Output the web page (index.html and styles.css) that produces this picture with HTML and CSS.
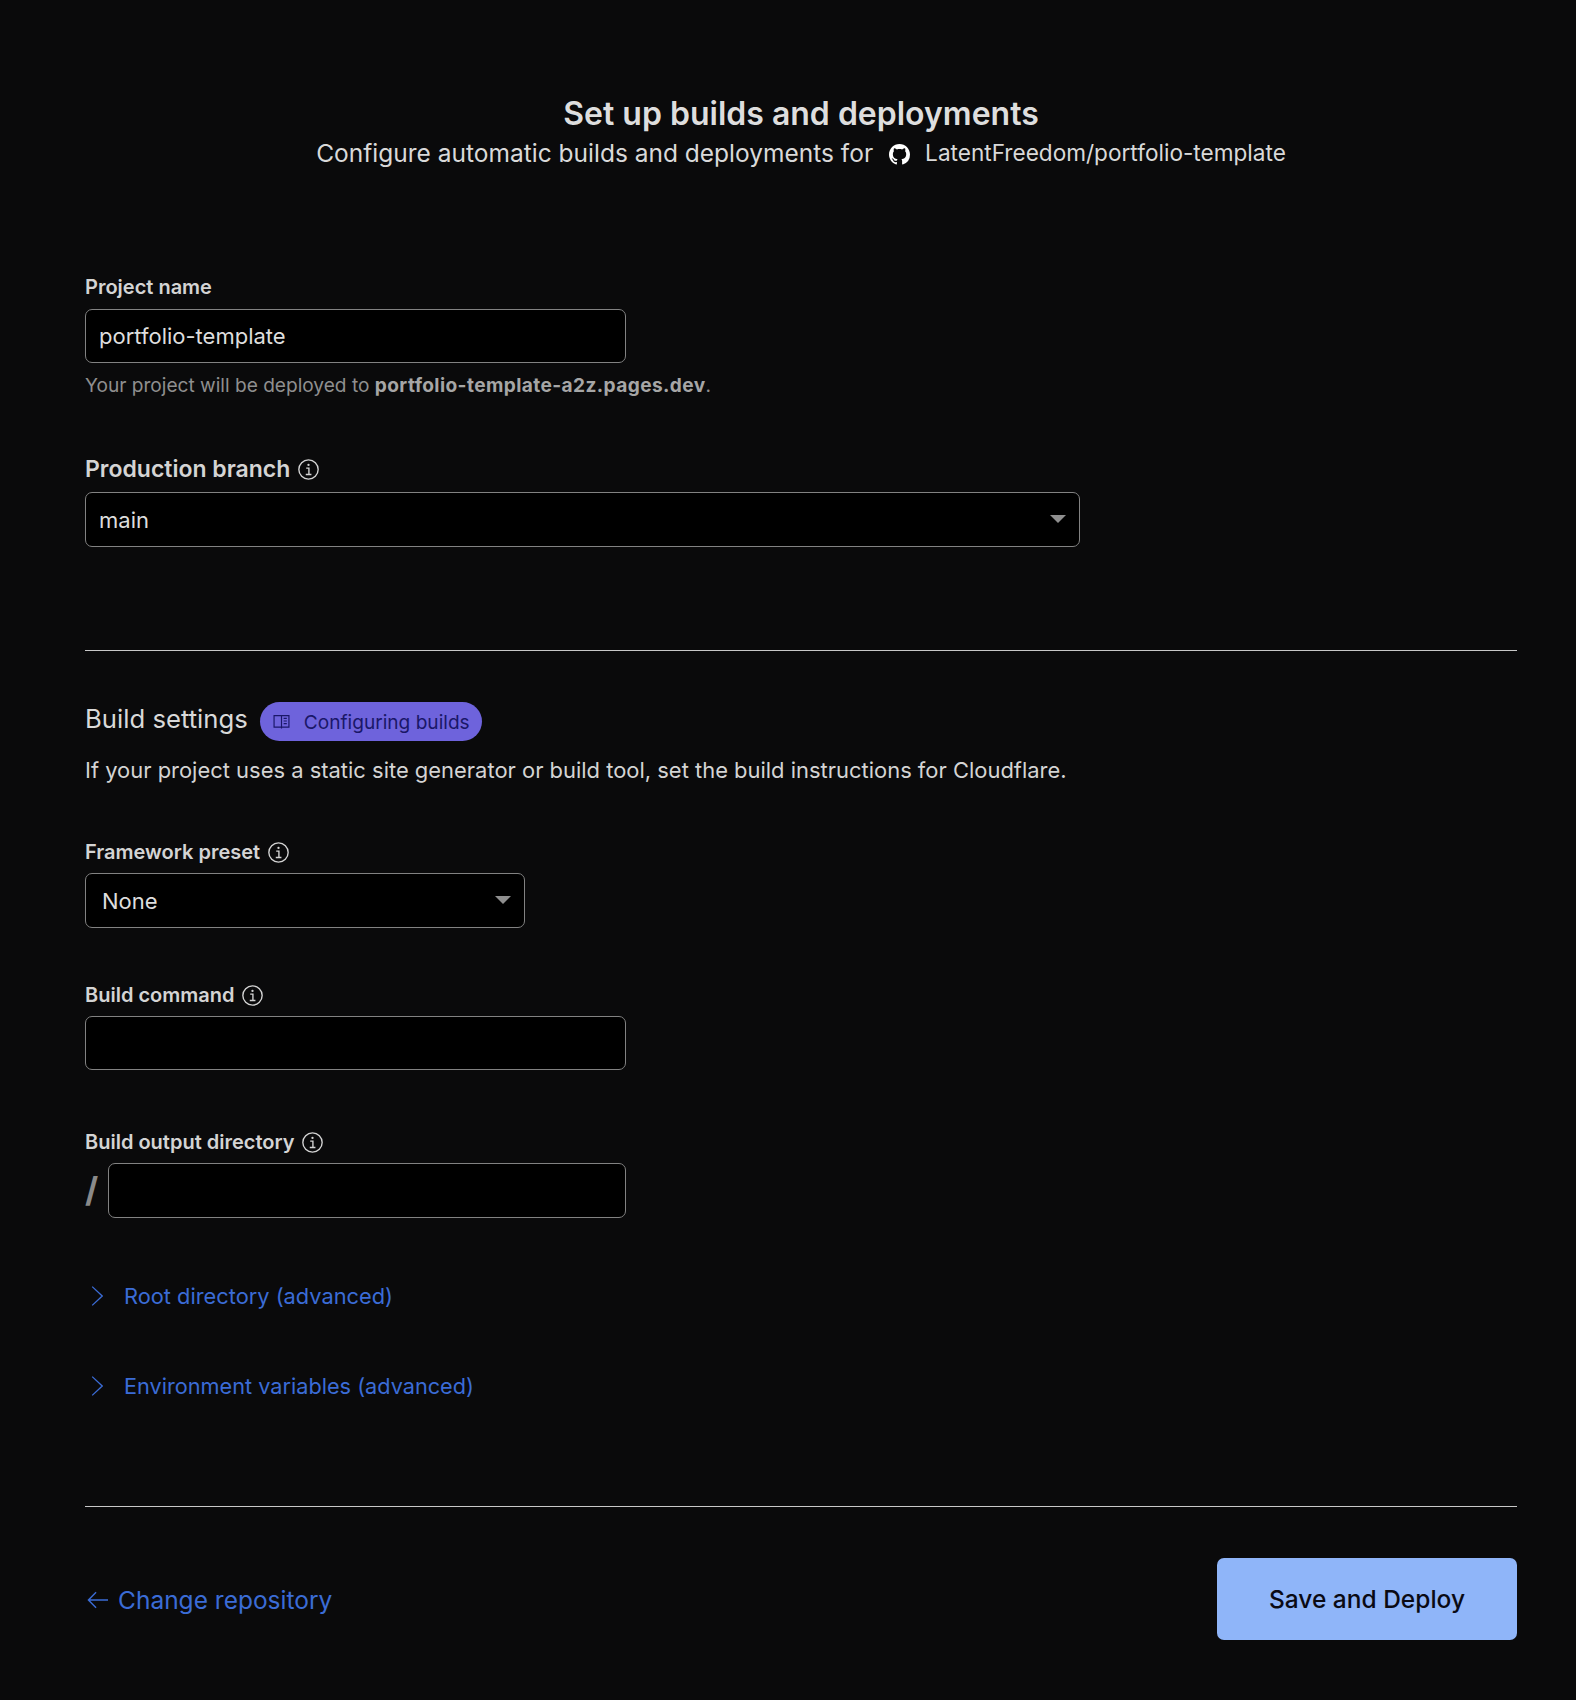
FILE: index.html
```html
<!DOCTYPE html>
<html lang="en">
<head>
  <meta charset="UTF-8">
  <title>Set up builds and deployments</title>
  <link rel="stylesheet" href="styles.css">
</head>

<body>

  <svg class="defs" width="0" height="0">
    <symbol id="info" viewBox="0 0 20 20">
      <circle cx="10" cy="10" r="9.2" fill="none" stroke="currentColor" stroke-width="1.3"/>
      <circle cx="10" cy="5.6" r="1.1" fill="currentColor"/>
      <path d="M7.8 8.7h2.6v6M7.4 14.8h5.4" fill="none" stroke="currentColor" stroke-width="1.3"/>
    </symbol>
    <symbol id="chevron" viewBox="0 0 12 20">
      <path d="M1.2 .6l10 9.4-10 9.4" fill="none" stroke="currentColor" stroke-width="1.3"/>
    </symbol>
    <symbol id="caret" viewBox="0 0 16 8">
      <path d="M0 0h16l-8 8z" fill="currentColor"/>
    </symbol>
  </svg>

  <header class="page-head">
    <h1>Set up builds and deployments</h1>
    <p class="subtitle">
      <span>Configure automatic builds and deployments for</span>
      <svg class="gh-icon" viewBox="0 0 16 16"><path fill="currentColor" d="M8 0C3.58 0 0 3.58 0 8c0 3.54 2.29 6.53 5.47 7.59.4.07.55-.17.55-.38 0-.19-.01-.82-.01-1.49-2.01.37-2.53-.49-2.69-.94-.09-.23-.48-.94-.82-1.13-.28-.15-.68-.52-.01-.53.63-.01 1.08.58 1.23.82.72 1.21 1.87.87 2.33.66.07-.52.28-.87.51-1.07-1.78-.2-3.64-.89-3.64-3.95 0-.87.31-1.59.82-2.15-.08-.2-.36-1.02.08-2.12 0 0 .67-.21 2.2.82.64-.18 1.32-.27 2-.27.68 0 1.36.09 2 .27 1.53-1.04 2.2-.82 2.2-.82.44 1.1.16 1.92.08 2.12.51.56.82 1.27.82 2.15 0 3.07-1.87 3.75-3.65 3.95.29.25.54.73.54 1.48 0 1.07-.01 1.93-.01 2.2 0 .21.15.46.55.38A8.013 8.013 0 0016 8c0-4.42-3.58-8-8-8z"/></svg>
      <span class="repo">LatentFreedom/portfolio-template</span>
    </p>
  </header>

  <section class="top-fields">
    <label class="field-label name-label">Project name</label>
    <input class="text-input" type="text" value="portfolio-template">
    <p class="hint">Your project will be deployed to <strong>portfolio-template-a2z.pages.dev</strong>.</p>

    <label class="field-label big">Production branch <svg class="info"><use href="#info"/></svg></label>
    <div class="select wide">
      <span>main</span>
      <svg class="caret"><use href="#caret"/></svg>
    </div>
  </section>

  <hr class="rule first">

  <section class="build">
    <div class="build-head">
      <h2>Build settings</h2>
      <a class="pill" href="#">
        <svg class="book" viewBox="0 0 16 16" fill="none" stroke="currentColor" stroke-width="1.1">
          <path d="M8 2.5H1v10.8h7zM8 2.5h7v10.8H8zM8 13.3v1.2M10 5h3M10 7.5h3M10 10h3"/>
        </svg>
        Configuring builds
      </a>
    </div>
    <p class="intro">If your project uses a static site generator or build tool, set the build instructions for Cloudflare.</p>

    <label class="field-label preset-label">Framework preset <svg class="info"><use href="#info"/></svg></label>
    <div class="select preset">
      <span>None</span>
      <svg class="caret"><use href="#caret"/></svg>
    </div>

    <label class="field-label command-label">Build command <svg class="info"><use href="#info"/></svg></label>
    <input class="text-input" type="text">

    <label class="field-label output-label">Build output directory <svg class="info"><use href="#info"/></svg></label>
    <div class="output-row">
      <span class="slash">/</span>
      <input class="text-input" type="text">
    </div>

    <a class="advanced root" href="#"><svg class="chevron"><use href="#chevron"/></svg>Root directory (advanced)</a>
    <a class="advanced env" href="#"><svg class="chevron"><use href="#chevron"/></svg>Environment variables (advanced)</a>
  </section>

  <hr class="rule last">

  <footer class="actions">
    <a class="back" href="#">
      <svg class="arrow" viewBox="0 0 22 18" fill="none" stroke="currentColor" stroke-width="1.5"><path d="M9.5 1L1.5 9l8 8M1.5 9H22"/></svg>
      Change repository
    </a>
    <button class="deploy">Save and Deploy</button>
  </footer>

</body>
</html>
```

FILE: styles.css
```css
* {
  box-sizing: border-box;
}

body {
  margin: 0;
  height: 1700px;
  padding: 0 59px 0 85px;
  background: #0a0a0b;
  color: #d9d9d9;
  font-family: Inter, sans-serif;
}

.defs {
  display: block;
  height: 0;
}

.page-head {
  padding-top: 96px;
  text-align: center;
}

h1 {
  margin: 0;
  font-size: 32px;
  line-height: 36px;
  font-weight: 600;
  color: #dedede;
}

.subtitle {
  display: flex;
  justify-content: center;
  align-items: center;
  margin: 3px 0 0;
  font-size: 24.5px;
  line-height: 36px;
  color: #d9d9d9;
}

.gh-icon {
  width: 21px;
  height: 21px;
  margin: 2px 15px 0 16px;
  color: #fff;
}

.repo {
  font-size: 22.6px;
}

.top-fields {
  margin-top: 104px;
}

.field-label {
  display: flex;
  align-items: center;
  gap: 8px;
  height: 24px;
  margin-bottom: 9px;
  font-size: 20px;
  font-weight: 600;
  color: #d4d4d4;
}

.name-label {
  margin-bottom: 10px;
}

.field-label.big {
  height: 28px;
  margin-top: 57px;
  font-size: 23px;
}

.info {
  width: 21px;
  height: 21px;
  color: #d4d4d4;
}

.text-input {
  display: block;
  width: 541px;
  height: 54px;
  padding: 0 13px;
  background: #000;
  border: 1px solid #828282;
  border-radius: 7px;
  color: #dedede;
  font-family: Inter, sans-serif;
  font-size: 22px;
}

.hint {
  margin: 9px 0 0;
  font-size: 19.1px;
  line-height: 26px;
  color: #8f8f8f;
}

.hint strong {
  font-weight: 700;
  letter-spacing: 0.4px;
  color: #a6a6a6;
}

.select {
  display: flex;
  justify-content: space-between;
  align-items: center;
  height: 55px;
  padding: 0 13px;
  background: #000;
  border: 1px solid #828282;
  border-radius: 7px;
  color: #dedede;
  font-size: 22px;
}

.select.wide {
  width: 995px;
}

.select.preset {
  width: 440px;
  padding: 0 13px 0 16px;
}

.caret {
  width: 16px;
  height: 8px;
  margin-bottom: 2px;
  color: #8f8f8f;
}

.rule {
  height: 1px;
  margin: 0;
  border: 0;
  background: #c8c8c8;
}

.rule.first {
  margin-top: 103px;
}

.build-head {
  display: flex;
  align-items: center;
  gap: 12px;
  margin-top: 51px;
}

h2 {
  margin: 0 0 6px;
  font-size: 25.7px;
  font-weight: 400;
  color: #d9d9d9;
}

.pill {
  display: flex;
  align-items: center;
  gap: 14px;
  height: 39px;
  padding: 0 12px 0 13px;
  border-radius: 20px;
  background: #6e63dc;
  color: #1a1768;
  font-size: 19.1px;
  text-decoration: none;
}

.book {
  width: 17px;
  height: 17px;
}

.intro {
  margin: 14px 0 0;
  font-size: 21.95px;
  line-height: 30px;
  color: #d4d4d4;
}

.preset-label {
  margin-top: 55px;
}

.command-label {
  margin-top: 55px;
}

.output-label {
  margin-top: 60px;
}

.output-row {
  display: flex;
  align-items: center;
  gap: 12px;
}

.output-row .text-input {
  width: 518px;
  height: 55px;
}

.slash {
  width: 11px;
  margin-bottom: 2px;
  font-size: 34px;
  font-weight: 700;
  color: #8a8a8a;
}

.advanced {
  display: flex;
  align-items: center;
  color: #3b6cd6;
  font-size: 21.8px;
  line-height: 30px;
  text-decoration: none;
}

.advanced.root {
  margin-top: 63px;
}

.advanced.env {
  margin-top: 60px;
}

.advanced.env {
  font-size: 21.7px;
}

.chevron {
  width: 12px;
  height: 20px;
  margin: 0 21px 0 6px;
}

.rule.last {
  margin-top: 105px;
}

.actions {
  display: flex;
  justify-content: space-between;
  align-items: center;
  margin-top: 51px;
}

.back {
  display: flex;
  align-items: center;
  gap: 10px;
  padding: 2px 0 0 2px;
  color: #3b6cd6;
  font-size: 24.5px;
  text-decoration: none;
}

.arrow {
  width: 21px;
  height: 18px;
}

.deploy {
  width: 300px;
  height: 82px;
  background: #8fb5f9;
  border: 0;
  border-radius: 7px;
  color: #0a0a14;
  font-family: Inter, sans-serif;
  font-size: 24.5px;
  font-weight: 500;
}
```
